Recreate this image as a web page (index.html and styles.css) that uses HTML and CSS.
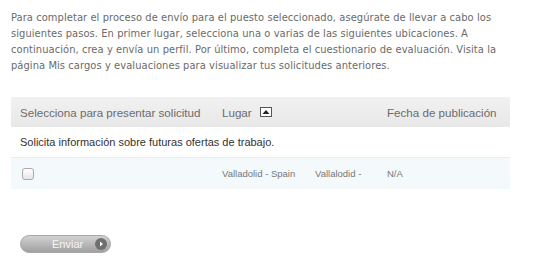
FILE: index.html
```html
<!DOCTYPE html>
<html lang="es">
<head>
<meta charset="utf-8">
<link rel="stylesheet" href="styles.css">
</head>
<body>
<div class="page">
  <p class="intro">Para completar el proceso de envío para el puesto seleccionado, asegúrate de llevar a cabo los siguientes pasos. En primer lugar, selecciona una o varias de las siguientes ubicaciones. A continuación, crea y envía un perfil. Por último, completa el cuestionario de evaluación. Visita la página Mis cargos y evaluaciones para visualizar tus solicitudes anteriores.</p>

  <div class="jobs">
    <div class="row head">
      <div class="cell c1">Selecciona para presentar solicitud</div>
      <div class="cell c2 span2">Lugar <span class="sort"><svg width="12" height="10" viewBox="0 0 12 10"><rect x="0.5" y="0.5" width="11" height="9" fill="#fff" stroke="#555"/><polygon points="2.5,7 6,3 9.5,7" fill="#222"/></svg></span></div>
      <div class="cell c4">Fecha de publicación</div>
    </div>
    <div class="row info">
      <div class="cell full">Solicita información sobre futuras ofertas de trabajo.</div>
    </div>
    <div class="row item">
      <div class="cell c1"><span class="check"></span></div>
      <div class="cell c2 small">Valladolid - Spain</div>
      <div class="cell c3 small">Vallalodid -</div>
      <div class="cell c4 small">N/A</div>
    </div>
  </div>

  <div class="actions">
    <button class="send" type="button"><span class="label">Enviar</span><span class="arrow"><svg width="10" height="10" viewBox="0 0 10 10"><polygon points="4,2.5 7,5 4,7.5" fill="#fff"/></svg></span></button>
  </div>
</div>
</body>
</html>
```
FILE: styles.css
```css
html, body {
  margin: 0;
  padding: 0;
  background: #fff;
}
.page {
  padding: 10px 40px 0 11px;
}
.intro {
  margin: 0;
  font-family: "DejaVu Sans Condensed", "DejaVu Sans", sans-serif;
  font-size: 11px;
  line-height: 16px;
  letter-spacing: 0.08px;
  color: #6a6a6a;
  width: 505px;
}
.jobs {
  margin-top: 23px;
  width: 499px;
  font-family: "Liberation Sans", Arial, sans-serif;
  color: #666;
}
.row {
  display: grid;
  grid-template-columns: 202px 93px 72px 132px;
  align-items: center;
}
.head {
  height: 30px;
  background: linear-gradient(#f1f1f1, #e8e8e8);
  font-size: 11.6px;
  color: #6b6b6b;
}
.cell {
  padding-left: 9px;
  white-space: nowrap;
}
.span2 {
  grid-column: 2 / span 2;
  display: flex;
  align-items: center;
  gap: 8px;
}
.sort {
  display: flex;
}
.info {
  height: 30px;
  font-size: 11px;
  color: #333;
  border-bottom: 1px solid #e6eef2;
}
.full {
  grid-column: 1 / -1;
}
.item {
  height: 31px;
  background: #f4f9fc;
}
.small {
  font-size: 9.5px;
  color: #777;
}
.check {
  display: block;
  margin: 1px 0 0 2px;
  width: 10px;
  height: 10px;
  border: 1px solid #aaa;
  border-radius: 3px;
  background: linear-gradient(#fff, #e6e6e6);
}
.actions {
  margin-top: 46px;
  padding-left: 9px;
}
.send {
  display: flex;
  align-items: center;
  justify-content: space-between;
  width: 91px;
  height: 18px;
  padding: 0 3px 0 31px;
  border: 1px solid #a8a8a8;
  border-radius: 9px;
  background: linear-gradient(#d2d2d2, #a0a0a0);
  font-family: "Liberation Sans", Arial, sans-serif;
  font-size: 11px;
  color: #f6f6f6;
  cursor: pointer;
}
.arrow {
  display: flex;
  align-items: center;
  justify-content: center;
  width: 12px;
  height: 12px;
  border-radius: 50%;
  background: #6f6f6f;
}
```
